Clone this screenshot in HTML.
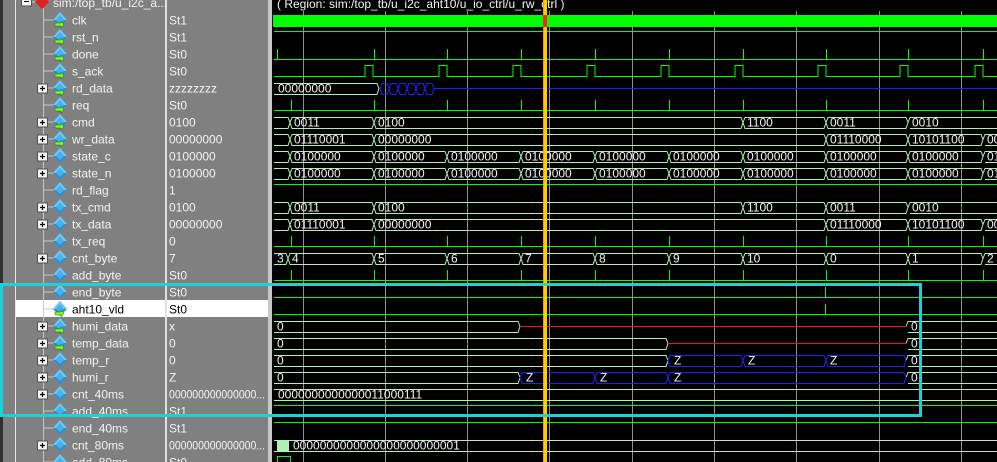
<!DOCTYPE html>
<html><head><meta charset="utf-8"><style>
html,body{margin:0;padding:0;background:#000;width:997px;height:462px;overflow:hidden}
svg{display:block}
text{font-family:"Liberation Sans",sans-serif;font-size:12px}
.n{fill:#f4f4f4}.v{fill:#f4f4f4}.w{fill:#f4f4f4}
.bus{fill:none;stroke:#b0f0b0;stroke-width:1}
.bit{fill:none;stroke:#00ff00;stroke-width:1}
</style></head><body>
<svg width="997" height="462" viewBox="0 0 997 462" xmlns="http://www.w3.org/2000/svg">
<defs>
<g id="dia"><polygon points="60,-8 67,0 60,7 53,0" fill="#2c8fd6"/><polygon points="60,-8 67,0 60,0 53,0" fill="#6cc8f4"/><polygon points="60,-5 64,0 60,4 56,0" fill="#48b0ea"/></g>
<g id="arr"><path d="M55 3h6v-2l3 3.5-3 3.5v-2h-6z" fill="#7cff20" stroke="#206000" stroke-width="0.5"/></g>
<g id="plus"><rect x="37.5" y="-4" width="10" height="9" fill="#f4f4f4" stroke="#505050"/><path d="M40 0.5h5M42.5 -2v5" stroke="#000" stroke-width="1.2"/></g>
</defs>
<rect x="0" y="0" width="273" height="462" fill="#808080"/>
<rect x="0" y="0" width="3" height="462" fill="#303030"/>
<rect x="15" y="0" width="1" height="462" fill="#e8e8e8"/>
<rect x="165" y="0" width="2" height="462" fill="#e0e0e0"/>
<rect x="268" y="0" width="4" height="462" fill="#c8c8c8"/>
<rect x="272" y="0" width="725" height="462" fill="#000"/>
<rect x="16" y="300" width="149" height="17" fill="#fff"/>
<rect x="167" y="300" width="101" height="17" fill="#fff"/>
<line x1="43.5" y1="8" x2="43.5" y2="462" stroke="#c8c8c8"/>
<rect x="21.5" y="-3" width="10" height="9" fill="#f4f4f4" stroke="#505050"/><path d="M24 1.5h5" stroke="#000"/>
<line x1="32" y1="2" x2="36" y2="2" stroke="#c8c8c8"/>
<polygon points="42,-6 49,2 42,9 35,2" fill="#e02020"/>
<text x="53" y="7" class="n">sim:/top_tb/u_i2c_a...</text>
<g transform="translate(0,0.5)">
<g transform="translate(0,19.5)"><line x1="44" x2="54" stroke="#c8c8c8"/><use href="#dia"/><use href="#arr"/><text x="72" y="4.5" class="n">clk</text><text x="169" y="4.5" class="v">St1</text></g>
<g transform="translate(0,36.5)"><line x1="44" x2="54" stroke="#c8c8c8"/><use href="#dia"/><use href="#arr"/><text x="72" y="4.5" class="n">rst_n</text><text x="169" y="4.5" class="v">St1</text></g>
<g transform="translate(0,53.5)"><line x1="44" x2="54" stroke="#c8c8c8"/><use href="#dia"/><use href="#arr"/><text x="72" y="4.5" class="n">done</text><text x="169" y="4.5" class="v">St0</text></g>
<g transform="translate(0,70.5)"><line x1="44" x2="54" stroke="#c8c8c8"/><use href="#dia"/><use href="#arr"/><text x="72" y="4.5" class="n">s_ack</text><text x="169" y="4.5" class="v">St0</text></g>
<g transform="translate(0,87.5)"><line x1="48" x2="54" stroke="#c8c8c8"/><use href="#plus"/><use href="#dia"/><use href="#arr"/><text x="72" y="4.5" class="n">rd_data</text><text x="169" y="4.5" class="v">zzzzzzzz</text></g>
<g transform="translate(0,104.5)"><line x1="44" x2="54" stroke="#c8c8c8"/><use href="#dia"/><use href="#arr"/><text x="72" y="4.5" class="n">req</text><text x="169" y="4.5" class="v">St0</text></g>
<g transform="translate(0,121.5)"><line x1="48" x2="54" stroke="#c8c8c8"/><use href="#plus"/><use href="#dia"/><use href="#arr"/><text x="72" y="4.5" class="n">cmd</text><text x="169" y="4.5" class="v">0100</text></g>
<g transform="translate(0,138.5)"><line x1="48" x2="54" stroke="#c8c8c8"/><use href="#plus"/><use href="#dia"/><use href="#arr"/><text x="72" y="4.5" class="n">wr_data</text><text x="169" y="4.5" class="v">00000000</text></g>
<g transform="translate(0,155.5)"><line x1="48" x2="54" stroke="#c8c8c8"/><use href="#plus"/><use href="#dia"/><text x="72" y="4.5" class="n">state_c</text><text x="169" y="4.5" class="v">0100000</text></g>
<g transform="translate(0,172.5)"><line x1="48" x2="54" stroke="#c8c8c8"/><use href="#plus"/><use href="#dia"/><text x="72" y="4.5" class="n">state_n</text><text x="169" y="4.5" class="v">0100000</text></g>
<g transform="translate(0,189.5)"><line x1="44" x2="54" stroke="#c8c8c8"/><use href="#dia"/><text x="72" y="4.5" class="n">rd_flag</text><text x="169" y="4.5" class="v">1</text></g>
<g transform="translate(0,206.5)"><line x1="48" x2="54" stroke="#c8c8c8"/><use href="#plus"/><use href="#dia"/><text x="72" y="4.5" class="n">tx_cmd</text><text x="169" y="4.5" class="v">0100</text></g>
<g transform="translate(0,223.5)"><line x1="48" x2="54" stroke="#c8c8c8"/><use href="#plus"/><use href="#dia"/><text x="72" y="4.5" class="n">tx_data</text><text x="169" y="4.5" class="v">00000000</text></g>
<g transform="translate(0,240.5)"><line x1="44" x2="54" stroke="#c8c8c8"/><use href="#dia"/><text x="72" y="4.5" class="n">tx_req</text><text x="169" y="4.5" class="v">0</text></g>
<g transform="translate(0,257.5)"><line x1="48" x2="54" stroke="#c8c8c8"/><use href="#plus"/><use href="#dia"/><text x="72" y="4.5" class="n">cnt_byte</text><text x="169" y="4.5" class="v">7</text></g>
<g transform="translate(0,274.5)"><line x1="44" x2="54" stroke="#c8c8c8"/><use href="#dia"/><text x="72" y="4.5" class="n">add_byte</text><text x="169" y="4.5" class="v">St0</text></g>
<g transform="translate(0,291.5)"><line x1="44" x2="54" stroke="#c8c8c8"/><use href="#dia"/><text x="72" y="4.5" class="n">end_byte</text><text x="169" y="4.5" class="v">St0</text></g>
<g transform="translate(0,308.5)"><line x1="44" x2="54" stroke="#c8c8c8"/><use href="#dia"/><use href="#arr"/><text x="72" y="4.5" fill="#000">aht10_vld</text><text x="169" y="4.5" fill="#000">St0</text></g>
<g transform="translate(0,325.5)"><line x1="48" x2="54" stroke="#c8c8c8"/><use href="#plus"/><use href="#dia"/><use href="#arr"/><text x="72" y="4.5" class="n">humi_data</text><text x="169" y="4.5" class="v">x</text></g>
<g transform="translate(0,342.5)"><line x1="48" x2="54" stroke="#c8c8c8"/><use href="#plus"/><use href="#dia"/><use href="#arr"/><text x="72" y="4.5" class="n">temp_data</text><text x="169" y="4.5" class="v">0</text></g>
<g transform="translate(0,359.5)"><line x1="48" x2="54" stroke="#c8c8c8"/><use href="#plus"/><use href="#dia"/><text x="72" y="4.5" class="n">temp_r</text><text x="169" y="4.5" class="v">0</text></g>
<g transform="translate(0,376.5)"><line x1="48" x2="54" stroke="#c8c8c8"/><use href="#plus"/><use href="#dia"/><text x="72" y="4.5" class="n">humi_r</text><text x="169" y="4.5" class="v">Z</text></g>
<g transform="translate(0,393.5)"><line x1="48" x2="54" stroke="#c8c8c8"/><use href="#plus"/><use href="#dia"/><text x="72" y="4.5" class="n">cnt_40ms</text><text x="169" y="4.5" class="v" textLength="96" lengthAdjust="spacingAndGlyphs">000000000000000...</text></g>
<g transform="translate(0,410.5)"><line x1="44" x2="54" stroke="#c8c8c8"/><use href="#dia"/><text x="72" y="4.5" class="n">add_40ms</text><text x="169" y="4.5" class="v">St1</text></g>
<g transform="translate(0,427.5)"><line x1="44" x2="54" stroke="#c8c8c8"/><use href="#dia"/><text x="72" y="4.5" class="n">end_40ms</text><text x="169" y="4.5" class="v">St1</text></g>
<g transform="translate(0,444.5)"><line x1="48" x2="54" stroke="#c8c8c8"/><use href="#plus"/><use href="#dia"/><text x="72" y="4.5" class="n">cnt_80ms</text><text x="169" y="4.5" class="v" textLength="96" lengthAdjust="spacingAndGlyphs">000000000000000...</text></g>
<g transform="translate(0,461.5)"><line x1="44" x2="54" stroke="#c8c8c8"/><use href="#dia"/><text x="72" y="4.5" class="n">add_80ms</text><text x="169" y="4.5" class="v">St0</text></g>
</g>
<text x="277" y="8" class="w">( Region: sim:/top_tb/u_i2c_aht10/u_io_ctrl/u_rw_ctrl )</text>
<g stroke="#909090" stroke-width="1">
<line x1="303.5" y1="11" x2="303.5" y2="462"/><line x1="385.5" y1="11" x2="385.5" y2="462"/><line x1="467.5" y1="11" x2="467.5" y2="462"/><line x1="549.5" y1="11" x2="549.5" y2="462"/><line x1="632.5" y1="11" x2="632.5" y2="462"/><line x1="714.5" y1="11" x2="714.5" y2="462"/><line x1="796.5" y1="11" x2="796.5" y2="462"/><line x1="879.5" y1="11" x2="879.5" y2="462"/><line x1="961.5" y1="11" x2="961.5" y2="462"/>
</g>
<rect x="273" y="15" width="724" height="12" fill="#00ff00"/>
<g transform="translate(0,28)"><path class="bit" d="M274 3.5H997"/></g>
<g transform="translate(0,45)"><path class="bit" d="M274 14.5H997M277.5 4v10M374.5 4v10M447.5 4v10M521.5 4v10M595.5 4v10M669.5 4v10M743.5 4v10M826.5 4v10M908.5 4v10M983.5 4v10"/></g>
<g transform="translate(0,62)"><path class="bit" d="M274 14.5H365V3.5H373V14.5H439V3.5H447V14.5H513V3.5H521V14.5H587V3.5H595V14.5H661V3.5H669V14.5H735V3.5H743V14.5H818V3.5H826V14.5H900V3.5H908V14.5H975V3.5H983V14.5H997"/></g>
<g transform="translate(0,79)"><path class="bus" d="M274 4.5H377L379 9.5L377 15.5H274"/><text x="278" y="13.5" class="w">00000000</text>
<path fill="none" stroke="#2020ff" d="M380 9.5L382 4.5H387L389 9.5L387 15.5H382ZM389 9.5L391 4.5H396L398 9.5L396 15.5H391ZM398 9.5L400 4.5H405L407 9.5L405 15.5H400ZM407 9.5L409 4.5H414L416 9.5L414 15.5H409ZM416 9.5L418 4.5H423L425 9.5L423 15.5H418ZM425 9.5L427 4.5H432L434 9.5L432 15.5H427ZM434 9.5H997"/></g>
<g transform="translate(0,96)"><path class="bit" d="M274 14.5H997M291.5 4v10M374.5 4v10M447.5 4v10M521.5 4v10M595.5 4v10M669.5 4v10M743.5 4v10M826.5 4v10M908.5 4v10M983.5 4v10"/></g>
<g transform="translate(0,113)"><path class="bus" d="M274 4.5H288L290 9.5L288 15.5H274M290 9.5L292 4.5H372L374 9.5L372 15.5H292ZM374 9.5L376 4.5H741L743 9.5L741 15.5H376ZM743 9.5L745 4.5H824L826 9.5L824 15.5H745ZM826 9.5L828 4.5H906L908 9.5L906 15.5H828ZM908 9.5L910 4.5H998M998 15.5H910Z"/>
<text x="294" y="13.5" class="w">0011</text><text x="378" y="13.5" class="w">0100</text><text x="747" y="13.5" class="w">1100</text><text x="830" y="13.5" class="w">0011</text><text x="912" y="13.5" class="w">0010</text></g>
<g transform="translate(0,130)"><path class="bus" d="M274 4.5H288L290 9.5L288 15.5H274M290 9.5L292 4.5H372L374 9.5L372 15.5H292ZM374 9.5L376 4.5H824L826 9.5L824 15.5H376ZM826 9.5L828 4.5H906L908 9.5L906 15.5H828ZM908 9.5L910 4.5H981L983 9.5L981 15.5H910ZM983 9.5L985 4.5H998M998 15.5H985Z"/>
<text x="294" y="13.5" class="w">01110001</text><text x="378" y="13.5" class="w">00000000</text><text x="830" y="13.5" class="w">01110000</text><text x="912" y="13.5" class="w">10101100</text><text x="987" y="13.5" class="w">00</text></g>
<g id="st" transform="translate(0,147)"><path class="bus" d="M274 4.5H288L290 9.5L288 15.5H274M290 9.5L292 4.5H372L374 9.5L372 15.5H292ZM374 9.5L376 4.5H445L447 9.5L445 15.5H376ZM447 9.5L449 4.5H519L521 9.5L519 15.5H449ZM521 9.5L523 4.5H593L595 9.5L593 15.5H523ZM595 9.5L597 4.5H667L669 9.5L667 15.5H597ZM669 9.5L671 4.5H741L743 9.5L741 15.5H671ZM743 9.5L745 4.5H824L826 9.5L824 15.5H745ZM826 9.5L828 4.5H906L908 9.5L906 15.5H828ZM908 9.5L910 4.5H981L983 9.5L981 15.5H910ZM983 9.5L985 4.5H998M998 15.5H985Z"/>
<text x="294" y="13.5" class="w">0100000</text><text x="378" y="13.5" class="w">0100000</text><text x="451" y="13.5" class="w">0100000</text><text x="525" y="13.5" class="w">0100000</text><text x="599" y="13.5" class="w">0100000</text><text x="673" y="13.5" class="w">0100000</text><text x="747" y="13.5" class="w">0100000</text><text x="830" y="13.5" class="w">0100000</text><text x="912" y="13.5" class="w">0100000</text><text x="987" y="13.5" class="w">01</text></g>
<use href="#st" transform="translate(0,17)"/>
<g transform="translate(0,181)"><path class="bit" d="M274 3.5H997"/></g>
<g transform="translate(0,198)"><path class="bus" d="M274 4.5H288L290 9.5L288 15.5H274M290 9.5L292 4.5H372L374 9.5L372 15.5H292ZM374 9.5L376 4.5H741L743 9.5L741 15.5H376ZM743 9.5L745 4.5H824L826 9.5L824 15.5H745ZM826 9.5L828 4.5H906L908 9.5L906 15.5H828ZM908 9.5L910 4.5H998M998 15.5H910Z"/>
<text x="294" y="13.5" class="w">0011</text><text x="378" y="13.5" class="w">0100</text><text x="747" y="13.5" class="w">1100</text><text x="830" y="13.5" class="w">0011</text><text x="912" y="13.5" class="w">0010</text></g>
<g transform="translate(0,215)"><path class="bus" d="M274 4.5H288L290 9.5L288 15.5H274M290 9.5L292 4.5H372L374 9.5L372 15.5H292ZM374 9.5L376 4.5H824L826 9.5L824 15.5H376ZM826 9.5L828 4.5H906L908 9.5L906 15.5H828ZM908 9.5L910 4.5H981L983 9.5L981 15.5H910ZM983 9.5L985 4.5H998M998 15.5H985Z"/>
<text x="294" y="13.5" class="w">01110001</text><text x="378" y="13.5" class="w">00000000</text><text x="830" y="13.5" class="w">01110000</text><text x="912" y="13.5" class="w">10101100</text><text x="987" y="13.5" class="w">00</text></g>
<g transform="translate(0,232)"><path class="bit" d="M274 14.5H997M291.5 4v10M374.5 4v10M447.5 4v10M521.5 4v10M595.5 4v10M669.5 4v10M743.5 4v10M826.5 4v10M908.5 4v10M983.5 4v10"/></g>
<g transform="translate(0,249)"><path class="bus" d="M274 4.5H286L288 9.5L286 15.5H274M288 9.5L290 4.5H372L374 9.5L372 15.5H290ZM374 9.5L376 4.5H445L447 9.5L445 15.5H376ZM447 9.5L449 4.5H519L521 9.5L519 15.5H449ZM521 9.5L523 4.5H593L595 9.5L593 15.5H523ZM595 9.5L597 4.5H667L669 9.5L667 15.5H597ZM669 9.5L671 4.5H741L743 9.5L741 15.5H671ZM743 9.5L745 4.5H824L826 9.5L824 15.5H745ZM826 9.5L828 4.5H906L908 9.5L906 15.5H828ZM908 9.5L910 4.5H981L983 9.5L981 15.5H910ZM983 9.5L985 4.5H998M998 15.5H985Z"/>
<text x="277" y="13.5" class="w">3</text><text x="292" y="13.5" class="w">4</text><text x="378" y="13.5" class="w">5</text><text x="451" y="13.5" class="w">6</text><text x="525" y="13.5" class="w">7</text><text x="599" y="13.5" class="w">8</text><text x="673" y="13.5" class="w">9</text><text x="747" y="13.5" class="w">10</text><text x="830" y="13.5" class="w">0</text><text x="912" y="13.5" class="w">1</text><text x="987" y="13.5" class="w">2</text></g>
<g transform="translate(0,266)"><path class="bit" d="M274 14.5H997M291.5 4v10M374.5 4v10M447.5 4v10M521.5 4v10M595.5 4v10M669.5 4v10M743.5 4v10M826.5 4v10M908.5 4v10M983.5 4v10"/></g>
<g transform="translate(0,283)"><path class="bit" d="M274 14.5H997M825.5 4v10"/></g>
<g transform="translate(0,300)"><path class="bit" d="M274 14.5H997M825.5 4v10"/></g>
<g transform="translate(0,317)"><path class="bus" d="M274 4.5H518L520 9.5L518 15.5H274M906 9.5L908 4.5H998M998 15.5H908Z"/><path d="M520 9.5H906" stroke="#ff1010"/>
<text x="277" y="13.5" class="w">0</text><text x="911" y="13.5" class="w">0</text></g>
<g transform="translate(0,334)"><path class="bus" d="M274 4.5H666L668 9.5L666 15.5H274M906 9.5L908 4.5H998M998 15.5H908Z"/><path d="M668 9.5H906" stroke="#ff1010"/>
<text x="277" y="13.5" class="w">0</text><text x="911" y="13.5" class="w">0</text></g>
<g transform="translate(0,351)"><path class="bus" d="M274 4.5H666L668 9.5L666 15.5H274M906 9.5L908 4.5H998M998 15.5H908Z"/>
<path fill="none" stroke="#2020ff" d="M668 9.5L670 4.5H741L743 9.5L741 15.5H670ZM743 9.5L745 4.5H824L826 9.5L824 15.5H745ZM826 9.5L828 4.5H904L906 9.5L904 15.5H828Z"/>
<text x="277" y="13.5" class="w">0</text><text x="674" y="13.5" class="w">Z</text><text x="748" y="13.5" class="w">Z</text><text x="830" y="13.5" class="w">Z</text><text x="911" y="13.5" class="w">0</text></g>
<g transform="translate(0,368)"><path class="bus" d="M274 4.5H518L520 9.5L518 15.5H274M906 9.5L908 4.5H998M998 15.5H908Z"/>
<path fill="none" stroke="#2020ff" d="M520 9.5L522 4.5H593L595 9.5L593 15.5H522ZM595 9.5L597 4.5H666L668 9.5L666 15.5H597ZM668 9.5L670 4.5H904L906 9.5L904 15.5H670Z"/>
<text x="277" y="13.5" class="w">0</text><text x="526" y="13.5" class="w">Z</text><text x="600" y="13.5" class="w">Z</text><text x="674" y="13.5" class="w">Z</text><text x="911" y="13.5" class="w">0</text></g>
<g transform="translate(0,385)"><path class="bus" d="M274 4.5H998M274 15.5H998"/><text x="278" y="13.5" class="w">0000000000000011000111</text></g>
<g transform="translate(0,402)"><path class="bit" d="M274 3.5H997"/></g>
<g transform="translate(0,419)"><path class="bit" d="M274 3.5H997"/></g>
<g transform="translate(0,436)"><rect x="277" y="4.5" width="12" height="11" fill="#b0f0b0"/><path class="bus" d="M274 4.5H998M274 15.5H998"/><text x="293" y="13.5" class="w">0000000000000000000000001</text></g>
<g transform="translate(0,453)"><path class="bit" d="M277.5 12V3.5H290.5V12"/></g>
<rect x="543" y="0" width="4" height="462" fill="#ffcc00"/>
<rect x="543" y="0" width="1" height="462" fill="#ff9900"/>
<rect x="543" y="15" width="4" height="12" fill="#ff2020"/>
<rect x="1.5" y="284.5" width="919" height="131" fill="none" stroke="#20d0d8" stroke-width="3"/>
</svg>
</body></html>
